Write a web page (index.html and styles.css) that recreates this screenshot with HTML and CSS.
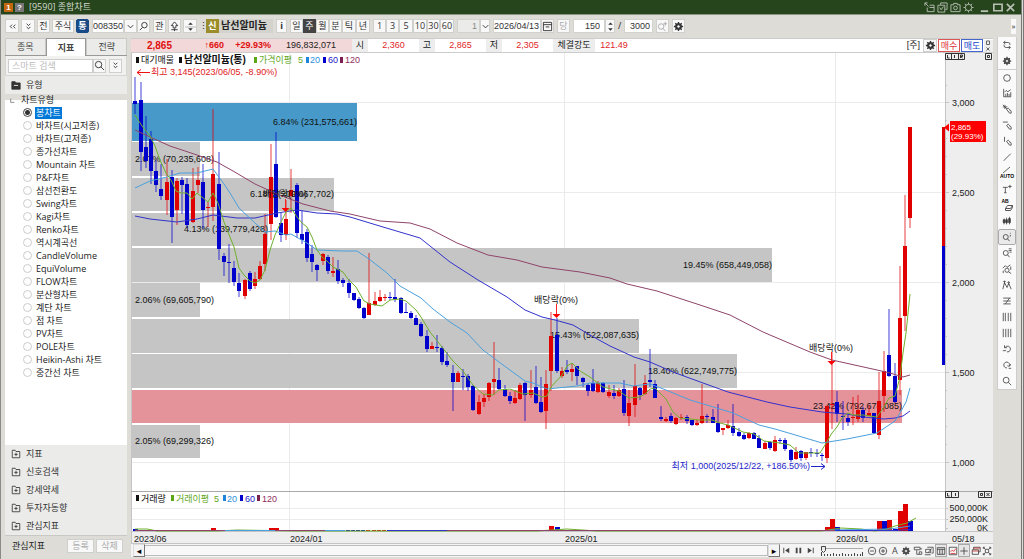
FILE: index.html
```html
<!DOCTYPE html>
<html lang="ko">
<head>
<meta charset="utf-8">
<title>[9590] 종합차트</title>
<link rel="stylesheet" href="styles.css">
</head>
<body>
<svg class="defs" aria-hidden="true">
  <symbol id="gear" viewBox="0 0 12 12"><path d="M6 1v10M1 6h10M2.500 2.500l7 7M9.500 2.500l-7 7" stroke="currentColor" stroke-width="1.500"/><circle cx="6" cy="6" r="3.300" fill="currentColor"/><circle cx="6" cy="6" r="1.800" fill="#fff"/></symbol>
  <symbol id="lens" viewBox="0 0 12 12"><circle cx="5" cy="5" r="3.500"/><path d="M7.500 7.500L11 11"/></symbol>
  <symbol id="pin" viewBox="0 0 12 12"><circle cx="7" cy="4.500" r="3"/><path d="M5 7L2 10"/></symbol>
  <symbol id="down" viewBox="0 0 12 12"><path d="M3 4.500l3 3 3-3"/></symbol>
  <symbol id="ddown" viewBox="0 0 12 12"><path d="M4 3l2 2 2-2M4 6.500l2 2 2-2"/></symbol>
  <symbol id="dleft" viewBox="0 0 12 12"><path d="M5.500 4l-2 2 2 2M9 4L7 6l2 2"/></symbol>
  <symbol id="spin" viewBox="0 0 12 12"><path d="M3.500 4L6 1.500 8.500 4zM3.500 8L6 10.500 8.500 8z" fill="currentColor" stroke="none"/></symbol>
  <symbol id="plusbox" viewBox="0 0 12 12"><path d="M1.500 3V10.500h9V3H6L5 1.500H1.500zM6 4.500v4M4 6.500h4"/></symbol>
  <symbol id="pen" viewBox="0 0 12 12"><path d="M5.500 6.500l2-1.500 3.500 3.500v2.500H9zM8 9l1-1"/></symbol>
</svg>

<header class="title">
  <span class="badge badge-num">1</span><span class="badge badge-help">?</span>
  <h1>[9590] 종합차트</h1>
  <div class="win-tools">
    <button aria-label="분리"><svg class="ic" viewBox="0 0 12 12"><path d="M1 1l4 4M1 4V1h3M6 3.500h5v7H3.500V6M6 6h5"/></svg></button>
    <button aria-label="복사"><svg class="ic" viewBox="0 0 12 12"><path d="M4 3V1h7v7H9M1 3.500h7.500V11H1zM3 6l1.500 2.500L7 5"/></svg></button>
    <button aria-label="캡처"><svg class="ic" viewBox="0 0 12 12"><path d="M1 3h3V1.500h4V3h3v7.500H1z"/><circle cx="6" cy="6.500" r="2"/></svg></button>
    <button aria-label="설정"><svg class="ic" viewBox="0 0 12 12"><circle cx="6" cy="6" r="3.500"/><path d="M6 .5v2M6 9.500v2M.5 6h2M9.500 6h2M2 2l1.500 1.500M8.500 8.500L10 10M2 10l1.500-1.500M8.500 3.500L10 2"/></svg></button>
  </div>
  <div class="win-controls">
    <button aria-label="최소화"><svg class="ic" viewBox="0 0 12 12"><path d="M2 10h8" stroke-width="2"/></svg></button>
    <button aria-label="최대화"><svg class="ic" viewBox="0 0 12 12"><path d="M2 2.500h9v7H2z" stroke-width="1.800"/></svg></button>
    <button aria-label="닫기"><svg class="ic" viewBox="0 0 12 12"><path d="M2 2l8 8M10 2l-8 8" stroke-width="1.800"/></svg></button>
  </div>
</header>

<nav class="toolbar" aria-label="차트 도구">
  <div class="grp">
    <button class="b w14" aria-label="이전"><svg class="ic"><use href="#dleft"/></svg></button>
    <button class="b w14" aria-label="펼치기"><svg class="ic"><use href="#ddown"/></svg></button>
    <button class="b w13">전</button>
    <button class="b w22">주식</button>
    <button class="b w13 tong">통</button>
  </div>
  <div class="grp tight">
    <input class="field code" aria-label="종목코드" value="008350">
    <button class="b w13" aria-label="종목 목록"><svg class="ic"><use href="#down"/></svg></button>
    <button class="b w13" aria-label="종목 검색"><svg class="ic"><use href="#pin"/></svg></button>
  </div>
  <div class="grp">
    <button class="b w13">관</button>
    <button class="b w13" aria-label="알림"><svg class="ic" viewBox="0 0 12 12"><path d="M6 1L2.500 5h2v2.500h3V5h2zM2.500 9.500h7M6 8v3"/></svg></button>
    <button class="b w14" aria-label="종목 이동"><svg class="ic"><use href="#spin"/><path d="M0 6h12" stroke="#bbb"/></svg></button>
    <span class="dots">⋮</span>
  </div>
  <div class="grp tight">
    <span class="credit">신</span><strong class="stock">남선알미늄</strong>
  </div>
  <button class="b w11 strong">i</button>
  <div class="grp tight period">
    <button class="b w13">일</button><button class="b w13 on">주</button><button class="b w13">월</button><button class="b w13">분</button><button class="b w14">틱</button><button class="b w14">년</button>
  </div>
  <div class="grp tight">
    <button class="b w13">1</button><button class="b w13">3</button><button class="b w14">5</button><button class="b w14">10</button><button class="b w13">30</button><button class="b w14">60</button>
  </div>
  <div class="grp tight">
    <input class="field one" aria-label="단위" value="1" disabled>
    <button class="b w10" aria-label="단위 선택"><svg class="ic"><use href="#down"/></svg></button>
  </div>
  <div class="grp tight">
    <input class="field date" aria-label="날짜" value="2026/04/13">
    <button class="b w13" aria-label="달력"><svg class="ic" viewBox="0 0 12 12"><path d="M1.500 1.500h9v9h-9zM1.500 4h9M4 6.500h4"/></svg></button>
  </div>
  <button class="b w13 dim">당</button>
  <div class="grp tight">
    <input class="field count" aria-label="표시 개수" value="150">
    <button class="b w10" aria-label="개수 조정"><svg class="ic"><use href="#spin"/></svg></button>
  </div>
  <span class="slash">/</span>
  <input class="field total" aria-label="전체 개수" value="3000">
  <button class="b w13 dim" aria-label="확대"><svg class="ic" viewBox="0 0 12 12"><circle cx="4.500" cy="6" r="3"/><path d="M6.500 8L9 11M9 1v4M7 3h4"/></svg></button>
  <button class="b w13" aria-label="차트 설정"><svg class="ic"><use href="#gear"/></svg></button>
  <button class="more" aria-label="더보기">»</button>
</nav>

<main class="work">
  <aside class="side">
    <div class="tabs"><button>종목</button><button class="active">지표</button><button>전략</button></div>
    <div class="search">
      <input aria-label="스마트 검색" placeholder="스마트 검색">
      <button class="b w13" aria-label="검색"><svg class="ic"><use href="#lens"/></svg></button>
      <button class="b w13 last" aria-label="펼치기"><svg class="ic"><use href="#ddown"/></svg></button>
    </div>
    <button class="sect open"><svg class="ic" viewBox="0 0 12 12"><path d="M1 2h4l1 1.500h5V11H1z" fill="currentColor"/><path d="M3.500 6.500h5" stroke="#fff"/></svg>유형</button>
    <fieldset class="tree">
      <legend><svg class="ic" viewBox="0 0 12 12"><path d="M4 4v4h4"/></svg>차트유형</legend>
      <label><input type="radio" name="type" checked><span>봉차트</span></label>
      <label><input type="radio" name="type"><span>바차트(시고저종)</span></label>
      <label><input type="radio" name="type"><span>바차트(고저종)</span></label>
      <label><input type="radio" name="type"><span>종가선차트</span></label>
      <label><input type="radio" name="type"><span>Mountain 차트</span></label>
      <label><input type="radio" name="type"><span>P&amp;F차트</span></label>
      <label><input type="radio" name="type"><span>삼선전환도</span></label>
      <label><input type="radio" name="type"><span>Swing차트</span></label>
      <label><input type="radio" name="type"><span>Kagi차트</span></label>
      <label><input type="radio" name="type"><span>Renko차트</span></label>
      <label><input type="radio" name="type"><span>역시계곡선</span></label>
      <label><input type="radio" name="type"><span>CandleVolume</span></label>
      <label><input type="radio" name="type"><span>EquiVolume</span></label>
      <label><input type="radio" name="type"><span>FLOW차트</span></label>
      <label><input type="radio" name="type"><span>분산형차트</span></label>
      <label><input type="radio" name="type"><span>계단 차트</span></label>
      <label><input type="radio" name="type"><span>점 차트</span></label>
      <label><input type="radio" name="type"><span>PV차트</span></label>
      <label><input type="radio" name="type"><span>POLE차트</span></label>
      <label><input type="radio" name="type"><span>Heikin-Ashi 차트</span></label>
      <label><input type="radio" name="type"><span>중간선 차트</span></label>
    </fieldset>
    <button class="sect"><svg class="ic"><use href="#plusbox"/></svg>지표</button>
    <button class="sect"><svg class="ic"><use href="#plusbox"/></svg>신호검색</button>
    <button class="sect"><svg class="ic"><use href="#plusbox"/></svg>강세약세</button>
    <button class="sect"><svg class="ic"><use href="#plusbox"/></svg>투자자동향</button>
    <button class="sect"><svg class="ic"><use href="#plusbox"/></svg>관심지표</button>
    <div class="side-foot"><span>관심지표</span><button class="b" disabled>등록</button><button class="b" disabled>삭제</button></div>
  </aside>

  <section class="panel">
    <div class="info">
      <div class="quote"><b class="q1">2,865</b><b class="q2">↑660</b><b class="q3">+29.93%</b><span class="q4">196,832,071</span></div>
      <span class="k">시</span><span class="v">2,360</span>
      <span class="k">고</span><span class="v">2,865</span>
      <span class="k">저</span><span class="v">2,305</span>
      <span class="k wide">체결강도</span><span class="v">121.49</span>
      <span class="unit">[주]</span>
      <button class="b w14" aria-label="설정"><svg class="ic"><use href="#gear"/></svg></button>
      <button class="buy">매수</button><button class="sell">매도</button>
      <div class="mini"><button aria-label="확장"><svg viewBox="0 0 8 6"><path d="M2.500 1h3v3.500h-3z"/></svg></button><button aria-label="닫기"><svg viewBox="0 0 8 6"><path d="M2.500 1.500l3 3M5.500 1.500l-3 3"/></svg></button></div>
    </div>

    <svg class="chart" viewBox="131 53 862 491" preserveAspectRatio="xMinYMin meet" role="img" aria-label="남선알미늄 주봉 차트">
      <rect x="131" y="53" width="862" height="491" fill="#fff"/>
      <rect x="945" y="53" width="48" height="491" fill="#eee"/>
      <rect x="131" y="532" width="862" height="12" fill="#eee"/>
      <g class="grid"><path d="M132 102.500H945M132 192.500H945M132 282.500H945M132 372.500H945M132 462.500H945M132 508.500H945M132 519.500H945M289.500 53V532M564.500 53V532M835.500 53V532"/></g>
      <g class="bands">
        <rect class="blue" x="132" y="103" width="225" height="38"/>
        <rect x="132" y="142" width="68" height="34"/>
        <rect x="132" y="178" width="202" height="33"/>
        <rect x="132" y="213" width="136" height="33"/>
        <rect x="132" y="248" width="640" height="34"/>
        <rect x="132" y="283" width="68" height="34"/>
        <rect x="132" y="319" width="507" height="34"/>
        <rect x="132" y="354" width="605" height="34"/>
        <rect class="pink" x="132" y="390" width="770" height="33"/>
        <rect x="132" y="425" width="68" height="33"/>
      </g>
      <g class="band-text">
        <text x="357" y="125">6.84% (231,575,661)</text>
        <text class="near" x="135" y="162">2.07% (70,235,608)</text>
        <text x="334" y="197">6.18% (209,067,702)</text>
        <text x="268" y="232">4.13% (139,779,428)</text>
        <text x="772" y="268">19.45% (658,449,058)</text>
        <text class="near" x="135" y="303">2.06% (69,605,790)</text>
        <text x="639" y="338">15.43% (522,087,635)</text>
        <text x="737" y="374">18.40% (622,749,775)</text>
        <text x="902" y="409">23.42% (792,678,085)</text>
        <text class="near" x="135" y="444">2.05% (69,299,326)</text>
      </g>
      <g id="candles"></g>
      <g class="lines">
        <polyline class="m120" points="135,130 150,137 170,146 197,155 217,162 233,171 255,184 277,194 303,204 330,211 350,214 380,221 410,223 430,229 457,243 488,255 517,260 542,267 580,272 610,278 627,284 657,291 700,305 730,315 763,332 810,352 832,360 877,370 890,373 903,377 910,375"/>
        <polyline class="m60" points="135,216 150,219 177,222 197,219 213,215 237,218 255,218 277,213 297,210 317,213 337,214 350,217 383,227 420,238 450,262 478,280 507,297 525,310 542,317 555,320 573,325 590,335 610,346 634,357 650,362 673,372 703,383 728,392 767,402 790,407 822,412 847,414 863,417 884,419 895,418 903,416 910,411"/>
        <polyline class="m20" points="135,188 150,181 167,177 180,173 197,173 213,169 224,184 230,193 239,208 255,223 265,232 275,231 286,235 291,234 307,243 317,250 343,251 357,251 369,259 387,273 400,286 421,298 433,309 450,322 467,333 483,350 499,362 525,381 533,383 547,389 577,386 590,383 620,383 633,386 650,384 666,390 690,400 707,405 733,413 759,425 775,429 792,434 822,443 847,439 877,433 895,421 900,413 906,402 910,388"/>
        <polyline class="m5" points="135,115 142,126 150,136 155,146 160,160 166,173 171,180 176,191 181,193 187,193 192,199 197,193 208,202 213,193 218,203 224,222 234,247 239,268 244,275 250,281 255,283 260,280 265,270 270,250 275,235 281,222 286,212 291,208 297,217 302,223 307,227 312,237 317,250 322,257 328,262 333,267 343,272 348,279 356,287 364,301 370,304 382,306 390,300 400,299 406,301 416,310 421,317 430,332 442,347 453,361 463,371 473,385 483,394 493,395 499,390 510,389 523,394 533,393 542,397 547,396 551,387 562,375 567,366 572,363 580,371 590,377 603,387 619,391 629,398 640,397 645,394 650,389 655,388 666,399 673,412 680,418 700,420 712,420 720,423 728,425 743,432 754,434 764,441 780,443 790,445 799,453 820,453 825,445 832,433 837,427 842,418 848,413 853,415 863,415 877,417 884,407 889,398 895,396 900,377 903,353 906,333 910,294"/>
      </g>
      <g class="events">
        <text x="285" y="197">배당락(0%)</text><path d="M285.500 199v9"/><path class="tip" d="M281.500 208h8l-4 4z"/>
        <text x="556" y="303">배당락(0%)</text><path d="M556.500 304v10"/><path class="tip" d="M552.500 314h8l-4 4z"/>
        <text x="831" y="351">배당락(0%)</text><path d="M831.500 352v9"/><path class="tip" d="M827.500 361h8l-4 4z"/>
      </g>
      <path class="low-arrow" d="M811 466.500h14M821 463.500l4 3-4 3"/>
      <path class="high-arrow" d="M150 72.500h-13M141 69.500l-4 3 4 3"/>
      <text class="high" x="151" y="75">최고 3,145(2023/06/05, -8.90%)</text>
      <text class="low" x="810" y="469">최저 1,000(2025/12/22, +186.50%)</text>
      <g class="legend">
        <rect x="136" y="57" width="3" height="6" fill="#111"/><text x="141" y="63">대기매물</text>
        <rect x="179" y="57" width="3" height="6" fill="#111"/><text class="name" x="184" y="63">남선알미늄(통)</text>
        <rect x="254" y="57" width="3" height="6" fill="#5aa617"/><text class="c5" x="259" y="63">가격이평</text><text class="c5" x="298" y="63">5</text>
        <rect x="306" y="57" width="3" height="6" fill="#1d86dc"/><text class="c20" x="310" y="63">20</text>
        <rect x="323" y="57" width="3" height="6" fill="#00c"/><text class="c60" x="328" y="63">60</text>
        <rect x="340" y="57" width="3" height="6" fill="#7b1e50"/><text class="c120" x="345" y="63">120</text>
        <rect x="136" y="495" width="3" height="6" fill="#111"/><text x="141" y="502">거래량</text>
        <rect x="171" y="495" width="3" height="6" fill="#5aa617"/><text class="c5" x="176" y="502">거래이평</text><text class="c5" x="214" y="502">5</text>
        <rect x="223" y="495" width="3" height="6" fill="#1d86dc"/><text class="c20" x="227" y="502">20</text>
        <rect x="240" y="495" width="3" height="6" fill="#00c"/><text class="c60" x="245" y="502">60</text>
        <rect x="257" y="495" width="3" height="6" fill="#7b1e50"/><text class="c120" x="262" y="502">120</text>
      </g>
      <path class="edge" d="M945.500 53V531M131.500 53V544"/>
      <rect x="942" y="127" width="3" height="119" fill="#d00"/><rect x="942" y="246" width="3" height="119" fill="#00c"/>
      <path class="ticks" d="M945 102.500h4M945 192.500h4M945 282.500h4M945 372.500h4M945 462.500h4M945 85.500h2M945 120.500h2M945 138.500h2M945 156.500h2M945 174.500h2M945 210.500h2M945 228.500h2M945 246.500h2M945 264.500h2M945 300.500h2M945 318.500h2M945 336.500h2M945 354.500h2M945 390.500h2M945 408.500h2M945 426.500h2M945 444.500h2M945 508.500h3M945 519.500h3M945 528.500h3"/>
      <path class="split" d="M131 491.500H993"/><path class="edge" d="M131 531.500H993M131 543.500H993"/>
      <g class="axis">
        <text x="952" y="106">3,000</text><text x="952" y="196">2,500</text><text x="952" y="286">2,000</text><text x="952" y="376">1,500</text><text x="952" y="466">1,000</text>
        <text class="end" x="988" y="511">500,000K</text><text class="end" x="988" y="522">250,000K</text><text class="end" x="988" y="531">0K</text>
        <text x="134" y="542">2023/06</text><text x="290" y="542">2024/01</text><text x="565" y="542">2025/01</text><text x="836" y="542">2026/01</text><text x="952" y="542">05/18</text>
      </g>
      <path d="M944 127.500l5-4v8z" fill="#f00"/>
      <rect x="950" y="121" width="36" height="21" fill="#f00"/>
      <g class="tag"><text x="951" y="130">2,865</text><text x="951" y="139">(29.93%)</text></g>
      <g class="marks">
        <path d="M945.500 53.500h19v6h-19zM951.500 53.500v6M958.500 53.500v6M985.500 53.500h6v6h-6zM987.500 55.500h2v2h-2zM947.500 55v3h2M954.500 55v3M960.500 58v-3h2v1.500h-2l2 1.500"/>
        <path d="M945.500 491.500h13v6h-13zM951.500 491.500v6M947.500 493v3h2M955.500 493v3M978.500 491.500h13v6h-13zM984.500 491.500v6M980.500 493.500h2v2h-2zM986.500 493l3 3M989.500 493l-3 3"/>
      </g>
      <g id="volume"></g>
      <g class="lines">
        <path class="m5" d="M135 529h12l10 2h60l20-1 60 1h240l30-2 30 2h224l20-3 20 1 14 2 12-2 8-3 12-3 9-5"/>
        <path class="m20" d="M225 530.500h120M830 530l60-1 20-3"/>
        <path class="m60" d="M387 530.500h60M840 530.500h55l15-1"/>
        <path class="m120" d="M135 530.500h90M275 530.500h50M447 530.500h383"/>
      </g>
    </svg>

    <div class="scroller">
      <button class="arrow" aria-label="왼쪽">◂</button><div class="track"></div><button class="arrow" aria-label="오른쪽">▸</button>
      <div class="play">
        <button aria-label="처음"><svg class="ic" viewBox="0 0 12 12"><path d="M3 3v6"/><path d="M9 3v6L4.500 6z" fill="currentColor" stroke="none"/></svg></button>
        <button aria-label="일시정지"><svg class="ic" viewBox="0 0 12 12"><path d="M4 3v6M8 3v6" stroke-width="2"/></svg></button>
        <button aria-label="끝"><svg class="ic" viewBox="0 0 12 12"><path d="M9 3v6"/><path d="M3 3v6l4.500-3z" fill="currentColor" stroke="none"/></svg></button>
      </div>
      <svg class="speed" viewBox="0 0 46 12"><path d="M3 3.500h42" stroke="#aaa"/><path d="M3.500 7v4M6.500 9v2M9.500 9v2M12.500 9v2M15.500 8v3M18.500 9v2M21.500 9v2M24.500 8v3M27.500 9v2M30.500 9v2M33.500 9v2M36.500 8v3M39.500 9v2M42.500 9v2M44.500 7v4"/><path d="M3.500 1.500h4v4l-2 2-2-2z" fill="#eee"/></svg>
      <div class="view">
        <button aria-label="축소"><svg class="ic" viewBox="0 0 12 12"><circle cx="6" cy="6" r="4.500"/><path d="M3.500 6h5"/></svg></button>
        <button aria-label="확대"><svg class="ic" viewBox="0 0 12 12"><circle cx="6" cy="6" r="4.500"/><path d="M3.500 6h5M6 3.500v5"/></svg></button>
        <button>A</button>
        <button aria-label="설정"><svg class="ic"><use href="#gear"/></svg></button>
        <button aria-label="필터"><svg class="ic" viewBox="0 0 12 12"><path d="M1.500 1.500h7v3h-7zM4.500 5v5h3M8.500 3.500h2.500M7.500 7h3v3h-3z"/></svg></button>
        <button aria-label="저장"><svg class="ic" viewBox="0 0 12 12"><path d="M4 1.500h7v7H9M2 4h6v4H2zM1 10.500h7M9 3l-4 5"/></svg></button>
        <button class="sel" aria-label="표"><svg class="ic" viewBox="0 0 12 12"><path d="M1.500 2h9v8h-9zM1.500 4h9M4.500 4v6M7.500 4v6"/></svg></button>
        <button aria-label="지표"><svg class="ic" viewBox="0 0 12 12"><path d="M1.500 1.500h9v9h-9z"/><path d="M3 7l2-2 2 1.500L9.500 3M3 9h6" stroke="#d33"/></svg></button>
        <button class="sel" aria-label="십자선"><svg class="ic" viewBox="0 0 12 12"><path d="M6 1.500v9M1.500 6h9"/></svg></button>
        <button aria-label="창 배열"><svg class="ic" viewBox="0 0 12 12"><path d="M3 4V1.500h8V7H9M1.500 4.500H9V10H1.500z"/><path d="M1.500 6H9M3 2.500h8" stroke="#c33"/></svg></button>
        <button aria-label="전체화면"><svg class="ic" viewBox="0 0 12 12"><path d="M1.500 1.500l2.500 2.500M10.500 1.500L8 4M1.500 10.500L4 8M10.500 10.500L8 8M1.500 3.500v-2h2M8.500 1.500h2v2M1.500 8.500v2h2M10.500 8.500v2h-2M4 4h4v4H4z"/></svg></button>
      </div>
    </div>
  </section>

  <nav class="tools" aria-label="그리기 도구">
    <button aria-label="새로고침"><svg class="ic" viewBox="0 0 12 12"><path d="M4 1L2 3l2 2M2 3h5.500q2 0 2 2v1M8 7l2 2-2 2M10 9H5Q2.500 9 2.500 7V5.500"/></svg></button>
    <button aria-label="설정"><svg class="ic"><use href="#gear"/></svg></button>
    <button class="sep" aria-label="원"><svg class="ic" viewBox="0 0 12 12"><circle cx="6" cy="6" r="4"/></svg></button>
    <button aria-label="차트"><svg class="ic" viewBox="0 0 12 12"><path d="M2 1v9.500h9M3 5l2-2 2 1.500L10.500 2M4.500 10V7M6.500 10V6M8.500 10V7M10.500 10V5"/></svg></button>
    <button aria-label="십자 그리기"><svg class="ic" viewBox="0 0 12 12"><path d="M1 3.500h5.500M3.500 1v5M1 1l5 5"/><use href="#pen"/></svg></button>
    <button aria-label="수평선"><svg class="ic" viewBox="0 0 12 12"><path d="M1 2.500h6"/><use href="#pen"/></svg></button>
    <button aria-label="수직선"><svg class="ic" viewBox="0 0 12 12"><path d="M3 1v6"/><use href="#pen"/></svg></button>
    <button aria-label="추세선"><svg class="ic" viewBox="0 0 12 12"><path d="M2 10.500L10.500 2"/></svg></button>
    <button class="auto" aria-label="자동 추세선"><svg viewBox="0 0 16 14"><path d="M4 7l7-6" fill="none" stroke="#666"/><text x="8" y="12" text-anchor="middle">AUTO</text></svg></button>
    <button aria-label="텍스트"><svg class="ic" viewBox="0 0 12 12"><path d="M1 4h6M4 4v6.500M2.500 10.500h3M9.500 1v4M7.500 3h4"/></svg></button>
    <button class="auto" aria-label="지우개"><svg viewBox="0 0 16 14"><text x="6" y="5" text-anchor="middle">AB</text><path d="M6.500 10.500l2-3h5l-2 3zM6.500 10.500v2h5l2-3v-2" fill="none" stroke="#555"/></svg></button>
    <button aria-label="봉"><svg class="ic" viewBox="0 0 12 12"><path d="M2.500 3v7M5.500 2v8M9 1v9"/><path d="M1.500 4.500h2v3.500h-2zM4.500 4.500h2v3.500h-2zM8 3h2v5H8z" fill="#333"/></svg></button>
    <button class="sel" aria-label="정보 조회"><svg class="ic" viewBox="0 0 12 12"><circle cx="4.500" cy="6" r="3"/><path d="M6.500 8L9 11M10 3.500v2M10 1v1"/></svg></button>
    <button aria-label="목록 조회"><svg class="ic" viewBox="0 0 12 12"><circle cx="4.500" cy="6" r="3"/><path d="M6.500 8L9 11M8 1h3.500M8 3h3.500M9 5h2.500"/></svg></button>
    <button aria-label="차트 조회"><svg class="ic" viewBox="0 0 12 12"><path d="M1 5l3-3 2 2 4-3M1.500 11V8"/><circle cx="6" cy="7.500" r="2.500"/><path d="M8 9.500l3 2M10.500 3v4"/></svg></button>
    <button aria-label="패턴"><svg class="ic" viewBox="0 0 12 12"><path d="M1 11l2-8 3 6 2-5 3 7M3 1v4M1.500 2.500L3 1l1.500 1.500M8 2v4M6.500 3.500L8 2l1.500 1.500"/></svg></button>
    <button aria-label="선 그룹"><svg class="ic" viewBox="0 0 12 12"><path d="M1.500 2.500h9M1.500 6h9M1.500 9.500h9M9 2.500l-5 7"/></svg></button>
    <button aria-label="수직 분할"><svg class="ic" viewBox="0 0 12 12"><path d="M1.500 1v10M4 1v10M7.500 1v10M10.500 1v10"/></svg></button>
    <button aria-label="균등 분할"><svg class="ic" viewBox="0 0 12 12"><path d="M1.500 1v10M4.500 1v10M7.500 1v10M10.500 1v10"/></svg></button>
    <button aria-label="되돌리기"><svg class="ic" viewBox="0 0 12 12"><path d="M3.500 4.500A3.500 3.500 0 1 1 6 9.500M3 1.500v3h3M1 8h4"/></svg></button>
    <button aria-label="다시하기"><svg class="ic" viewBox="0 0 12 12"><path d="M6 9.500A3.500 3.500 0 1 1 9 7M6.500 7L9 7.500 10.500 5M8 10h3"/></svg></button>
    <button aria-label="돋보기"><svg class="ic"><use href="#lens"/></svg></button>
  </nav>
</main>
<script src="chart.js"></script>
</body>
</html>
```
FILE: chart.js
```js
// Weekly bars: direction, then high, body top, body bottom and low on the price scale.
const bars = `B77,101,104,114 B82,100,152,171 B116,147,161,168 B131,139,171,184 B160,171,185,192 B164,189,196,200
R159,182,200,215 B170,177,217,243 R178,181,210,225 B177,180,185,214 B178,184,225,228 R168,191,222,223
R167,180,185,193 B164,182,210,229 R202,207,208,227 R109,174,207,221 B152,184,249,260 B253,256,262,276
B244,262,263,283 B261,268,282,286 B273,283,291,297 R279,280,296,299 B271,273,289,291 R272,279,286,289
R261,266,279,280 R214,234,264,271 R144,177,224,240 B132,164,217,218 B213,223,235,242 R200,219,235,240
R169,190,196,213 B183,185,233,238 B211,234,240,244 B229,232,258,262 B245,254,262,272 B264,265,270,281
R253,254,261,265 B255,257,271,274 R257,271,273,277 B260,269,281,284 B278,280,283,287 B279,283,293,298
B293,293,300,301 B297,299,308,309 B307,308,318,319 R253,303,315,315 R292,301,305,306 R290,297,301,302
R294,297,298,301 B292,297,298,300 B279,297,299,302 B297,298,313,314 B303,312,313,313 B311,313,318,319
B315,318,325,325 B322,324,336,337 B330,336,349,352 R342,346,349,349 B335,347,348,352 B346,348,362,365
B352,361,365,367 B365,373,382,411 R371,373,382,382 B369,376,377,390 B374,376,387,391 B385,386,410,411
R395,402,414,415 R394,398,402,407 R382,383,397,401 R342,379,382,395 B368,380,389,390 B385,389,396,397
B392,396,401,404 R390,398,403,404 R383,385,399,400 B382,383,395,421 R370,390,395,398 B366,387,403,404
B377,402,412,413 R370,384,411,429 R312,336,371,391 B318,335,371,373 R367,371,376,378 B360,370,372,374
R363,369,372,381 B366,366,376,385 B377,378,382,387 B384,385,391,396 B369,383,391,392 R381,383,392,393
B382,383,392,393 R385,392,396,398 B385,393,396,399 R388,390,396,397 B380,389,413,416 R390,403,416,426
R364,386,405,417 B387,388,395,400 R375,383,394,395 B349,380,382,387 B380,384,398,398 B406,417,419,421
R417,419,421,422 B413,416,421,423 R417,418,424,425 R414,417,418,420 B415,417,421,424 B420,420,425,426
R420,423,425,426 R384,416,423,424 B414,416,417,423 B409,417,423,423 B404,423,432,433 R428,428,430,435
R420,425,428,429 B404,426,433,436 B428,432,436,437 B433,435,439,440 R432,433,438,439 B432,433,439,439
B435,438,448,448 R441,443,449,449 B441,442,448,450 R436,440,451,452 B438,440,441,444 B438,440,449,451
B449,450,460,462 R447,452,459,460 B450,451,458,461 R452,452,458,460 B448,452,453,457 B449,453,453,457
B453,455,456,461 R406,406,458,463 R352,404,405,429 B391,402,414,422 B401,416,417,430 B413,418,422,426
R397,417,418,425 R395,410,419,422 B407,410,418,422 R405,413,416,416 B413,413,433,434 R372,401,435,439
R351,371,396,412 B309,355,376,377 B363,376,402,403 R266,318,380,395 R195,246,316,331 R127,127,218,228`
  .trim().split(/\s+/);
const busy = { 0: 2, 15: 3, 26: 3, 27: 3, 80: 5, 81: 4, 133: 4, 134: 12, 135: 4, 143: 10, 144: 10, 145: 11, 146: 2, 147: 20, 148: 27, 149: 10 };
const volumeColor = { 27: 'R', 144: 'B', 145: 'R', 149: 'B' };
const ns = 'http://www.w3.org/2000/svg';

function rect(parent, x, y, width, height, cls) {
  const el = document.createElementNS(ns, 'rect');
  Object.entries({ x, y, width, height, class: cls }).forEach(([k, v]) => el.setAttribute(k, v));
  parent.appendChild(el);
}

const candles = document.getElementById('candles');
const volume = document.getElementById('volume');
bars.forEach((bar, i) => {
  const dir = bar[0];
  const [high, top, bottom, low] = bar.slice(1).split(',').map(Number);
  const x = Math.round(135.3 + i * 5.2) - 2;
  rect(candles, x + 1.5, high, 1, Math.max(1, low - high), 'wick ' + dir);
  rect(candles, x, top, 4, Math.max(1, bottom - top), dir);
  const h = busy[i] || 1;
  rect(volume, x - (h > 1 ? 0 : 1), 531 - h, h > 1 ? 5 : 4, h, volumeColor[i] || dir);
});
```
FILE: styles.css
```css
* { box-sizing: border-box; }
body {
  margin: 0;
  height: 100vh;
  display: flex;
  flex-direction: column;
  background: #dddcd7;
  border-left: 1px solid #8b8b88;
  border-right: 3px double #777;
  color: #222;
  font: 9px/12px "Open Sans", "Noto Sans CJK KR", sans-serif;
  overflow: hidden;
}
button, input { font: inherit; color: inherit; margin: 0; padding: 0; }
button { border: 0; background: none; display: flex; align-items: center; justify-content: center; white-space: nowrap; }
.defs { display: none; }
.ic { width: 11px; height: 11px; fill: none; stroke: currentColor; stroke-width: 1; flex: none; }

.title { display: flex; align-items: center; height: 15px; margin: 0 -3px 0 -1px; padding: 0 8px 0 4px; background: #26451d; border-bottom: 1px solid #8a9484; color: #d5dbd0; flex: none; }
.title h1 { flex: 1; margin: 0 0 0 3px; font-size: 9px; font-weight: 400; }
.badge { width: 9px; height: 9px; margin-right: 2px; font: bold 8px/9px "Liberation Sans", sans-serif; text-align: center; color: #fff; }
.badge-num { background: #c4660d; }
.badge-help { background: #77777a; }
.win-tools, .win-controls { display: flex; gap: 2px; color: #b8c0b3; }
.win-controls { margin-left: 5px; }
.win-controls button { width: 11px; }

.toolbar { display: flex; align-items: center; gap: 3px; height: 23px; padding: 0 5px 1px 4px; flex: none; }
.grp { display: flex; align-items: center; gap: 2px; }
.grp.tight { gap: 0; }
.b { height: 14px; border: 1px solid #cfcfcb; background: #f8f8f8; flex: none; overflow: hidden; line-height: 12px; color: #333; }
.w10 { width: 10px; }
.w11 { width: 11px; }
.w13 { width: 13px; }
.w14 { width: 14px; }
.w22 { width: 22px; }
.strong { font-weight: 700; }
.dim, .b:disabled { color: #aaa; }
.tong { background: #174a86; color: #fff; border-color: #174a86; border-radius: 2px; font-weight: 700; }
.on { background: #444; color: #fff; border-color: #444; }
.field { height: 14px; min-width: 0; border: 1px solid #d2d2ce; background: #fff; padding: 0 2px; font: 9px/12px "Liberation Sans", sans-serif; color: #333; }
.code { width: 32px; padding: 0; }
.one { width: 23px; text-align: right; background: #ebebe9; color: #888; }
.date { width: 48px; padding: 0; }
.count { width: 32px; text-align: right; padding-right: 4px; }
.total { width: 29px; text-align: right; }
.dots { width: 4px; text-align: center; }
.credit { width: 13px; height: 14px; background: #9b8d2b; color: #fff; font-weight: 700; text-align: center; line-height: 13px; }
.stock { width: 54px; height: 14px; padding-left: 2px; background: #d3d2cd; font-weight: 700; line-height: 13px; font-size: 10px; overflow: hidden; }
.slash { width: 3px; text-align: center; }
.more { margin-left: auto; width: 5px; height: 15px; background: #f8f8f8; overflow: hidden; font-size: 8px; }

.work { flex: 1; min-height: 0; display: flex; gap: 4px; padding: 0 5px 2px 4px; }
.side { width: 122px; flex: none; display: flex; flex-direction: column; }
.tabs { display: flex; height: 18px; border-bottom: 1px solid #999; flex: none; }
.tabs button { flex: 1; background: #ebebe9; border: 1px solid #c9c9c5; border-bottom: 0; color: #444; }
.tabs .active { background: #fff; font-weight: 700; border-color: #999; height: 18px; }
.search { display: flex; align-items: center; height: 20px; padding: 0 4px 0 2px; background: #f1f1ef; border: 1px solid #d5d5d1; border-top: 0; flex: none; }
.search input { flex: 1; min-width: 0; height: 14px; border: 1px solid #ccc; background: #fff; padding: 0 3px; }
.search input::placeholder { color: #bbb; opacity: 1; }
.search .last { margin-left: 3px; }
.sect { justify-content: flex-start; gap: 5px; height: 18px; padding-left: 6px; background: #ebebea; color: #333; flex: none; }
.sect .ic { width: 10px; height: 10px; }
.tree { flex: 1; min-height: 0; margin: 0; padding: 0 0 0 18px; border: 0; background: #fff; overflow: hidden; }
.tree legend { display: flex; align-items: center; margin-left: -16px; padding: 0; height: 12px; gap: 3px; }
.tree legend .ic { color: #888; }
.tree label { display: flex; align-items: center; gap: 3px; height: 13px; }
.tree label span { padding: 0 1px; line-height: 12px; white-space: nowrap; }
.tree input { appearance: none; width: 9px; height: 9px; border: 1px solid #ccc; border-radius: 50%; background: #fff; flex: none; }
.tree input:checked { border-color: #444; background: radial-gradient(circle, #333 0 2px, #fff 3px); }
.tree input:checked + span { background: #0078d7; color: #fff; }
.side-foot { display: flex; align-items: center; gap: 2px; height: 22px; padding: 0 4px 2px 7px; border-top: 1px solid #c8c8c4; flex: none; }
.side-foot span { flex: 1; }
.side-foot .b { width: 27px; }

.panel { flex: 1; min-width: 0; display: flex; flex-direction: column; background: #fff; }
.info { display: flex; align-items: center; height: 15px; border-top: 1px solid #ccc; border-bottom: 1px solid #ccc; background: #fff; flex: none; font: 9px/13px "Liberation Sans", "Noto Sans CJK KR", sans-serif; overflow: hidden; }
.quote { display: flex; width: 221px; height: 13px; background: #f2d8d8; color: #e01010; flex: none; }
.q1 { width: 41px; text-align: right; font-size: 10px; }
.q2 { width: 52px; text-align: right; }
.q3 { width: 47px; text-align: right; }
.q4 { width: 65px; text-align: right; color: #222; }
.k { width: 16px; height: 13px; background: #ededed; text-align: center; line-height: 12px; }
.k.wide { width: 42px; }
.v { width: 51px; text-align: center; color: #e02828; }
.k.wide + .v { width: 38px; }
.unit { margin-left: auto; padding-right: 3px; }
.info .b { height: 13px; }
.buy, .sell { width: 22px; height: 13px; border: 1px solid #d55; color: #d33; margin-left: 1px; line-height: 10px; overflow: hidden; }
.sell { border-color: #46c; color: #24c; }
.mini { display: flex; flex-direction: column; width: 9px; margin-left: 1px; background: #eee; }
.mini button, .mini svg { width: 8px; height: 6px; }
.mini svg { fill: none; stroke: #666; }

.chart { flex: 1; min-height: 0; width: 100%; display: block; font: 9px "Liberation Sans", "Noto Sans CJK KR", sans-serif; }
.grid path { stroke: #ebebeb; fill: none; }
.bands rect { fill: #c5c5c5; }
.bands .blue { fill: #4699c8; }
.bands .pink { fill: #e5939b; }
.band-text text { text-anchor: end; fill: #111; }
.band-text .near { text-anchor: start; }
.R { fill: #e00000; }
.B { fill: #0000cc; }
.wick { opacity: .75; }
.lines polyline, .lines path { fill: none; stroke-width: 1; }
.m5 { stroke: #6fb02c; }
.m20 { stroke: #4aa0de; }
.m60 { stroke: #3232cc; }
.m120 { stroke: #8f4469; }
.events text { text-anchor: middle; fill: #111; }
.events path { stroke: #f22; fill: none; }
.events .tip { fill: #f00; stroke: none; }
.low-arrow { stroke: #22c; fill: none; }
.high-arrow { stroke: #e11; fill: none; }
.high { fill: #e01818; }
.low { fill: #2222c8; text-anchor: end; }
.legend text { fill: #111; }
.legend .name { font-size: 10px; font-weight: 700; }
.legend .c5 { fill: #62a81e; }
.legend .c20 { fill: #2c8fdd; }
.legend .c60 { fill: #2222c8; }
.legend .c120 { fill: #8f2e60; }
.edge, .ticks { stroke: #c4c4c4; fill: none; }
.split { stroke: #aaa; }
.axis text { fill: #222; }
.axis .end { text-anchor: end; }
.tag text { fill: #fff; font-size: 8px; }
.marks path { stroke: #333; fill: none; }

.scroller { display: flex; align-items: center; height: 13px; background: #f4f4f4; flex: none; padding: 0 0 0 2px; }
.scroller button { height: 13px; overflow: hidden; color: #444; font-size: 9px; }
.scroller button.sel { background: #e6e6e6; border: 1px solid #aaa; }
.scroller .arrow { width: 12px; background: #f4f4f4; border: 1px solid #ddd; border-right-color: #777; border-bottom-color: #777; font-family: "DejaVu Sans", sans-serif; color: #000; flex: none; }
.track { flex: 1; height: 11px; border: 1px solid #bbb; border-left: 0; background: #f8f8f8; }
.play { display: grid; grid-template-columns: repeat(3, 1fr); width: 37px; flex: none; }
.view { display: grid; grid-template-columns: repeat(11, 1fr); width: 127px; flex: none; }
.view .ic { width: 10px; height: 10px; }
.speed { width: 46px; height: 12px; margin: 0 2px 0 1px; fill: none; stroke: #444; flex: none; }

.tools { width: 20px; flex: none; align-self: flex-start; display: flex; flex-direction: column; background: #fafafa; border: 1px solid #ccc; border-top: 0; margin: -1px -1px 0 0; }
.tools button { height: 16px; color: #444; }
.tools .sep { border-top: 1px solid #ccc; }
.tools .sel { border: 1px solid #aaa; border-radius: 2px; background: #eaeaea; }
.tools .ic { width: 10px; height: 10px; }
.auto svg { width: 16px; height: 14px; font: bold 5px "Liberation Sans", sans-serif; }
```
